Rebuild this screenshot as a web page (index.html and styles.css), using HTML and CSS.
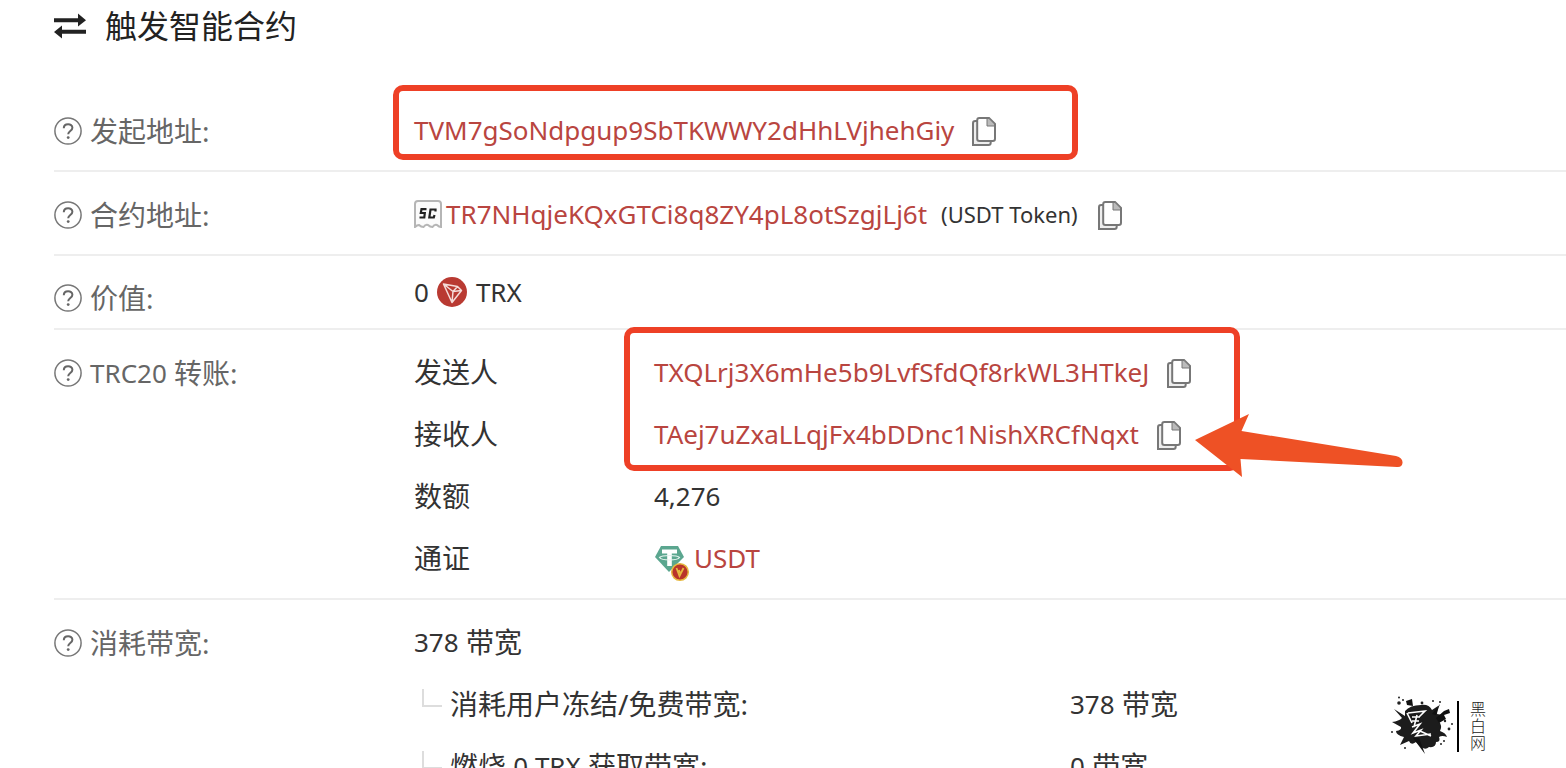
FILE: index.html
```
<!DOCTYPE html>
<html lang="zh-CN">
<head>
    <meta charset="UTF-8">
    <meta name="viewport" content="width=device-width, initial-scale=1.0">
    <title>触发智能合约</title>
    <link rel="stylesheet" href="styles.css">
</head>
<body>
    <!-- shared icons -->
    <svg class="sprite" aria-hidden="true">
        <symbol id="help" viewBox="0 0 28 28">
            <circle cx="14" cy="14" r="13.1" fill="none" stroke="#777" stroke-width="1.5"/>
            <path d="M9.8 11.2c0-5.4 8.6-5.2 8.6-.4 0 3.2-4.2 3.2-4.2 6.4" fill="none" stroke="#666" stroke-width="2"/>
            <circle cx="14.2" cy="20.6" r="1.4" fill="#666"/>
        </symbol>
        <symbol id="copy" viewBox="0 0 24 29">
            <path d="M5 4H3.2Q1 4 1 6.2V28H16.5Q18.700 28 18.700 25.800V24" fill="#eee" stroke="#777" stroke-width="2"/>
            <path d="M7.400 1H17L23 7V21.800Q23 24 20.800 24H7.400Q5.200 24 5.200 21.800V3.200Q5.200 1 7.400 1Z" fill="#fff" stroke="#777" stroke-width="2"/>
            <path d="M15 1.500V9H22.500V7L17 1.500Z" fill="#bbb" stroke="#777" stroke-width="1"/>
        </symbol>
    </svg>

    <main class="page">
        <h1 class="title">
            <svg class="title-icon" viewBox="0 0 32 26"><path d="M0 5.200H24V.5L32 7.200 24 13.500V9.200H0ZM32 16.800H8V12.500L0 19 8 25.500V20.800H32Z" fill="#222"/></svg>
            触发智能合约
        </h1>

        <section class="row">
            <div class="label"><svg class="help"><use href="#help"/></svg>发起地址:</div>
            <div class="value">
                <div class="line">
                    <a class="address" href="#">TVM7gSoNdpgup9SbTKWWY2dHhLVjhehGiy</a>
                    <button class="copy" aria-label="复制"><svg><use href="#copy"/></svg></button>
                </div>
                <div class="mark mark-owner"></div>
            </div>
        </section>

        <section class="row">
            <div class="label"><svg class="help"><use href="#help"/></svg>合约地址:</div>
            <div class="value">
                <div class="line">
                    <svg class="contract" viewBox="0 0 28 28">
                        <path d="M1 27V4Q1 1 4 1H24Q27 1 27 4V27Q25 27 23 25 20.500 24 18.500 27 16 27 14 25 11.500 24 9.500 27 7 27 5 25 3 25 1 27Z" fill="#fbfbfb" stroke="#b5b5b5" stroke-width="2"/>
                        <path d="M12.500 9.200H7.500L6.800 13H10.800L10.300 17.500H5.500M21.500 11.500V9.500H16.500L15.300 17.500H19.800L20.500 15" fill="none" stroke="#222" stroke-width="2.200"/>
                    </svg>
                    <a class="address" href="#">TR7NHqjeKQxGTCi8q8ZY4pL8otSzgjLj6t</a>
                    <span class="tag">(USDT Token)</span>
                    <button class="copy" aria-label="复制"><svg><use href="#copy"/></svg></button>
                </div>
            </div>
        </section>

        <section class="row row-short">
            <div class="label"><svg class="help"><use href="#help"/></svg>价值:</div>
            <div class="value">
                <div class="line">
                    <span class="latin">0</span>
                    <svg class="trx" viewBox="0 0 30 30">
                        <circle cx="15" cy="15" r="15" fill="#b93a32"/>
                        <path d="M6.500 7 20.500 9.500 24.500 13.500 15 25.500ZM6.500 7 16 14.500 15 25.500M16 14.500 20.500 9.500M16 14.500 24.500 13.500" fill="none" stroke="#f5dcd9" stroke-width="1.500" stroke-linejoin="round"/>
                    </svg>
                    <span class="latin">TRX</span>
                </div>
            </div>
        </section>

        <section class="row">
            <div class="label"><svg class="help"><use href="#help"/></svg><span class="latin">TRC20</span>&nbsp;转账:</div>
            <div class="value">
                <div class="pair">
                    <div class="line">发送人</div>
                    <div class="line">
                        <a class="address" href="#">TXQLrj3X6mHe5b9LvfSfdQf8rkWL3HTkeJ</a>
                        <button class="copy" aria-label="复制"><svg><use href="#copy"/></svg></button>
                    </div>
                </div>
                <div class="pair">
                    <div class="line">接收人</div>
                    <div class="line">
                        <a class="address" href="#">TAej7uZxaLLqjFx4bDDnc1NishXRCfNqxt</a>
                        <button class="copy" aria-label="复制"><svg><use href="#copy"/></svg></button>
                    </div>
                </div>
                <div class="pair">
                    <div class="line">数额</div>
                    <div class="line"><span class="latin">4,276</span></div>
                </div>
                <div class="pair">
                    <div class="line">通证</div>
                    <div class="line">
                        <svg class="usdt" viewBox="0 0 36 36">
                            <path d="M7 1H24L30 12 15 27 1 12Z" fill="#5ba68f"/>
                            <path d="M8 4.500H23V8.500H17.800V21H13.200V8.500H8Z" fill="#fff"/>
                            <path d="M5.500 12.500C8 9.800 23 9.800 25.500 12.500 23 15.800 8 15.800 5.500 12.500Z" fill="none" stroke="#e6f4ef" stroke-width="1.200"/>
                            <circle cx="26" cy="27" r="8.300" fill="#b9352b" stroke="#e6b93f" stroke-width="1.500"/>
                            <path d="M22.500 23 25.500 31 29.500 23M25 25 26 28" fill="none" stroke="#e6b93f" stroke-width="1.800"/>
                        </svg>
                        <a class="address" href="#">USDT</a>
                    </div>
                </div>
                <div class="mark mark-transfer"></div>
                <svg class="arrow" viewBox="0 0 208 64"><path d="M0 27 54 1 46.500 18 201 43Q208 45 207.500 50 207 54.500 202 54L45.500 46 47 64Z" fill="#ee5125"/></svg>
            </div>
        </section>

        <section class="row row-last">
            <div class="label"><svg class="help"><use href="#help"/></svg>消耗带宽:</div>
            <div class="value">
                <div class="line"><span class="latin">378</span>&nbsp;带宽</div>
                <div class="cost">
                    <div class="line branch">消耗用户冻结/免费带宽:</div>
                    <div class="line"><span class="latin">378</span>&nbsp;带宽</div>
                </div>
                <div class="cost">
                    <div class="line branch">燃烧&nbsp;<span class="latin">0 TRX</span>&nbsp;获取带宽:</div>
                    <div class="line"><span class="latin">0</span>&nbsp;带宽</div>
                </div>
            </div>
        </section>

        <div class="brand">
            <svg class="splash" viewBox="0 0 62 60">
                <path d="M14 15Q19 9 30 9 38 8 41 14L47 10 46 18 52 19 47 24Q52 30 49 35 55 37 56 41 51 39 48 41 50 46 45 46 45 52 38 51 34 55 29 50L25 46Q20 50 18 45L9 49 13 41Q5 39 5 35 11 34 10 31L1 26Q8 25 11 22L3 13 14 20Z" fill="#1c1c1c"/>
                <path d="M22 42 34 58 28 42ZM15 5 21 3 22 10 16 9ZM41 18 49 8 45 19ZM45 22 53 15 58 13 59 17 53 19 55 23 48 27Z" fill="#111"/>
                <g fill="#222"><circle cx="8" cy="1.500" r="1"/><circle cx="8" cy="7" r="1.800"/><circle cx="12" cy="4" r="1"/><circle cx="31" cy="7" r="1.400"/><circle cx="42" cy="5" r="1"/><circle cx="49" cy="6" r="1"/><circle cx="54" cy="25" r="1.200"/><circle cx="61" cy="28" r="1"/><circle cx="58" cy="33" r="1.400"/><circle cx="1" cy="36" r="1"/><circle cx="50" cy="48" r="1"/><circle cx="53" cy="45" r="1"/><circle cx="14" cy="52" r="1"/></g>
                <path d="M16 17 21 27M17 17 34 15 28 21M21 21H29M21 25H28M26 19 23 31M21 31 29 28 22 37 30 34 25 40 40 38M29 35 40 40" fill="none" stroke="#fff" stroke-width="1.600"/>
            </svg>
            <div class="brand-name">黑白网</div>
        </div>
    </main>
</body>
</html>
```
FILE: styles.css
```
* { margin: 0; padding: 0; box-sizing: border-box; }
body {
    font-family: "Noto Sans", "Noto Sans CJK SC", sans-serif;
    font-size: 28px;
    line-height: 60px;
    color: #333;
    background: #fff;
}
.sprite { position: absolute; width: 0; height: 0; }
.page { position: relative; height: 100vh; overflow: hidden; padding-left: 54px; }
.title {
    display: flex;
    align-items: center;
    gap: 19px;
    height: 52px;
    margin-bottom: 36px;
    font-size: 32px;
    font-weight: 400;
    color: #222;
}
.title-icon { width: 32px; height: 26px; }

.row {
    display: grid;
    grid-template-columns: 360px 1fr;
    padding: 12px 0 8px;
    border-bottom: 2px solid #eee;
}
.row-short { padding-bottom: 0; }
.row-short .label { height: 60px; }
.row-short .line { height: 50px; }
.row-last { border-bottom: none; }
.label { display: flex; align-items: center; height: 62px; color: #666; white-space: nowrap; }
.help { width: 28px; height: 28px; margin-right: 8px; }
.value { position: relative; white-space: nowrap; }
.line { display: flex; align-items: center; height: 62px; padding-bottom: 2px; }
.pair { display: grid; grid-template-columns: 240px 1fr; }
.latin { font-size: 26px; }
.address { font-size: 26px; color: #b94540; text-decoration: none; }
.tag { margin: 0 2px 0 14px; font-size: 22px; }

.copy { display: flex; margin: 2px 0 0 18px; border: none; background: none; cursor: pointer; }
.copy svg { width: 24px; height: 29px; }
.contract { width: 28px; height: 28px; margin-right: 4px; }
.trx { width: 30px; height: 30px; margin: 0 9px 0 8px; }
.usdt { width: 36px; height: 38px; margin: 10px 4px 0 0; }

.cost { display: grid; grid-template-columns: 656px 1fr; }
.branch { padding-left: 8px; }
.branch::before {
    content: "";
    width: 18px;
    height: 16px;
    margin: 0 8px 12px 0;
    border-left: 2px solid #ddd;
    border-bottom: 2px solid #ddd;
}

/* highlights over the addresses */
.mark { position: absolute; border: 6px solid #ee4026; border-radius: 10px; pointer-events: none; }
.mark-owner { left: -21px; top: -15px; width: 685px; height: 75px; }
.mark-transfer { left: 210px; top: -15px; width: 616px; height: 144px; }
.arrow { position: absolute; left: 781px; top: 71px; width: 208px; height: 64px; }

.brand { position: absolute; right: 80px; bottom: 12px; display: flex; align-items: center; gap: 4px; }
.splash { width: 62px; height: 60px; }
.brand-name {
    width: 29px;
    padding-left: 11px;
    border-left: 2px solid #000;
    font-size: 16px;
    font-weight: 300;
    line-height: 17px;
    color: #222;
    word-break: break-all;
}
```
